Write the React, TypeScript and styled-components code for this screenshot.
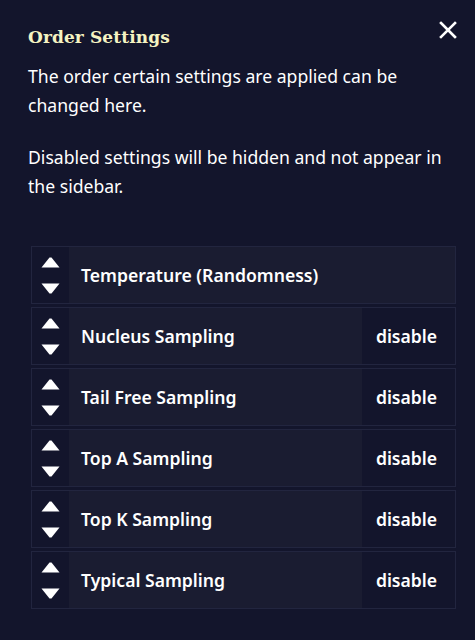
import React from "react";
import styled, { createGlobalStyle } from "styled-components";

const Global = createGlobalStyle`
  html, body { margin: 0; padding: 0; background: #13152c; }
  body { font-family: "Noto Sans", "Open Sans", sans-serif; color: #ffffff; }
  * { box-sizing: border-box; }
`;

const Panel = styled.div`
  width: 475px;
  height: 640px;
  background: #13152c;
  padding: 24px 18px 0 28px;
  display: flex;
  flex-direction: column;
`;

const Header = styled.div`
  display: flex;
  justify-content: space-between;
  align-items: flex-start;
`;

const Title = styled.h2`
  margin: 1px 0 0 0;
  font-family: "DejaVu Serif", "Liberation Serif", serif;
  font-weight: 700;
  font-size: 17px;
  letter-spacing: 0.1px;
  color: #f5f3c2;
  line-height: 24px;
`;

const Close = styled.button`
  background: none;
  border: none;
  padding: 0;
  margin: -3px 0 0 0;
  width: 18px;
  height: 18px;
  display: flex;
  align-items: center;
  justify-content: center;
  cursor: pointer;
`;

const Para = styled.p<{ $top: number }>`
  margin: ${(p) => p.$top}px 0 0 0;
  font-size: 17.6px;
  line-height: 29px;
  color: #ffffff;
  padding-right: 8px;
`;

const List = styled.div`
  margin: 45px 0 0 3px;
  display: flex;
  flex-direction: column;
  gap: 3px;
`;

const Row = styled.div`
  display: flex;
  align-items: stretch;
  height: 58px;
  width: 425px;
  border: 1px solid #22253f;
  background: #1a1c31;
`;

const Arrows = styled.div`
  width: 37px;
  background: #13152c;
  display: flex;
  flex-direction: column;
  align-items: center;
  justify-content: center;
  gap: 15px;
`;

const Label = styled.div`
  flex: 1;
  display: flex;
  align-items: center;
  padding-left: 12px;
  font-size: 17.6px;
  font-weight: 600;
`;

const Disable = styled.button`
  width: 93px;
  background: #13152c;
  border: none;
  color: #ffffff;
  font-family: inherit;
  font-size: 17.6px;
  font-weight: 600;
  cursor: pointer;
  padding: 0 4px 0 0;
`;

const Tri = ({ down }: { down?: boolean }) => (
  <svg width="19" height="11" viewBox="0 0 19 11">
    {down ? (
      <path d="M0.5 0.5 H18.5 L10.5 10.5 H8.5 Z" fill="#fff" />
    ) : (
      <path d="M0.5 10.5 H18.5 L10.5 0.5 H8.5 Z" fill="#fff" />
    )}
  </svg>
);

const items = [
  { name: "Temperature (Randomness)", canDisable: false },
  { name: "Nucleus Sampling", canDisable: true },
  { name: "Tail Free Sampling", canDisable: true },
  { name: "Top A Sampling", canDisable: true },
  { name: "Top K Sampling", canDisable: true },
  { name: "Typical Sampling", canDisable: true },
];

export default function App() {
  return (
    <>
      <Global />
      <Panel>
        <Header>
          <Title>Order Settings</Title>
          <Close aria-label="close">
            <svg width="18" height="18" viewBox="0 0 18 18">
              <path d="M2 2 L16 16 M16 2 L2 16" stroke="#fff" strokeWidth="2.6" strokeLinecap="square" />
            </svg>
          </Close>
        </Header>
        <Para $top={13}>The order certain settings are applied can be changed here.</Para>
        <Para $top={23}>Disabled settings will be hidden and not appear in the sidebar.</Para>
        <List>
          {items.map((it) => (
            <Row key={it.name}>
              <Arrows>
                <Tri />
                <Tri down />
              </Arrows>
              <Label>{it.name}</Label>
              {it.canDisable && <Disable>disable</Disable>}
            </Row>
          ))}
        </List>
      </Panel>
    </>
  );
}
